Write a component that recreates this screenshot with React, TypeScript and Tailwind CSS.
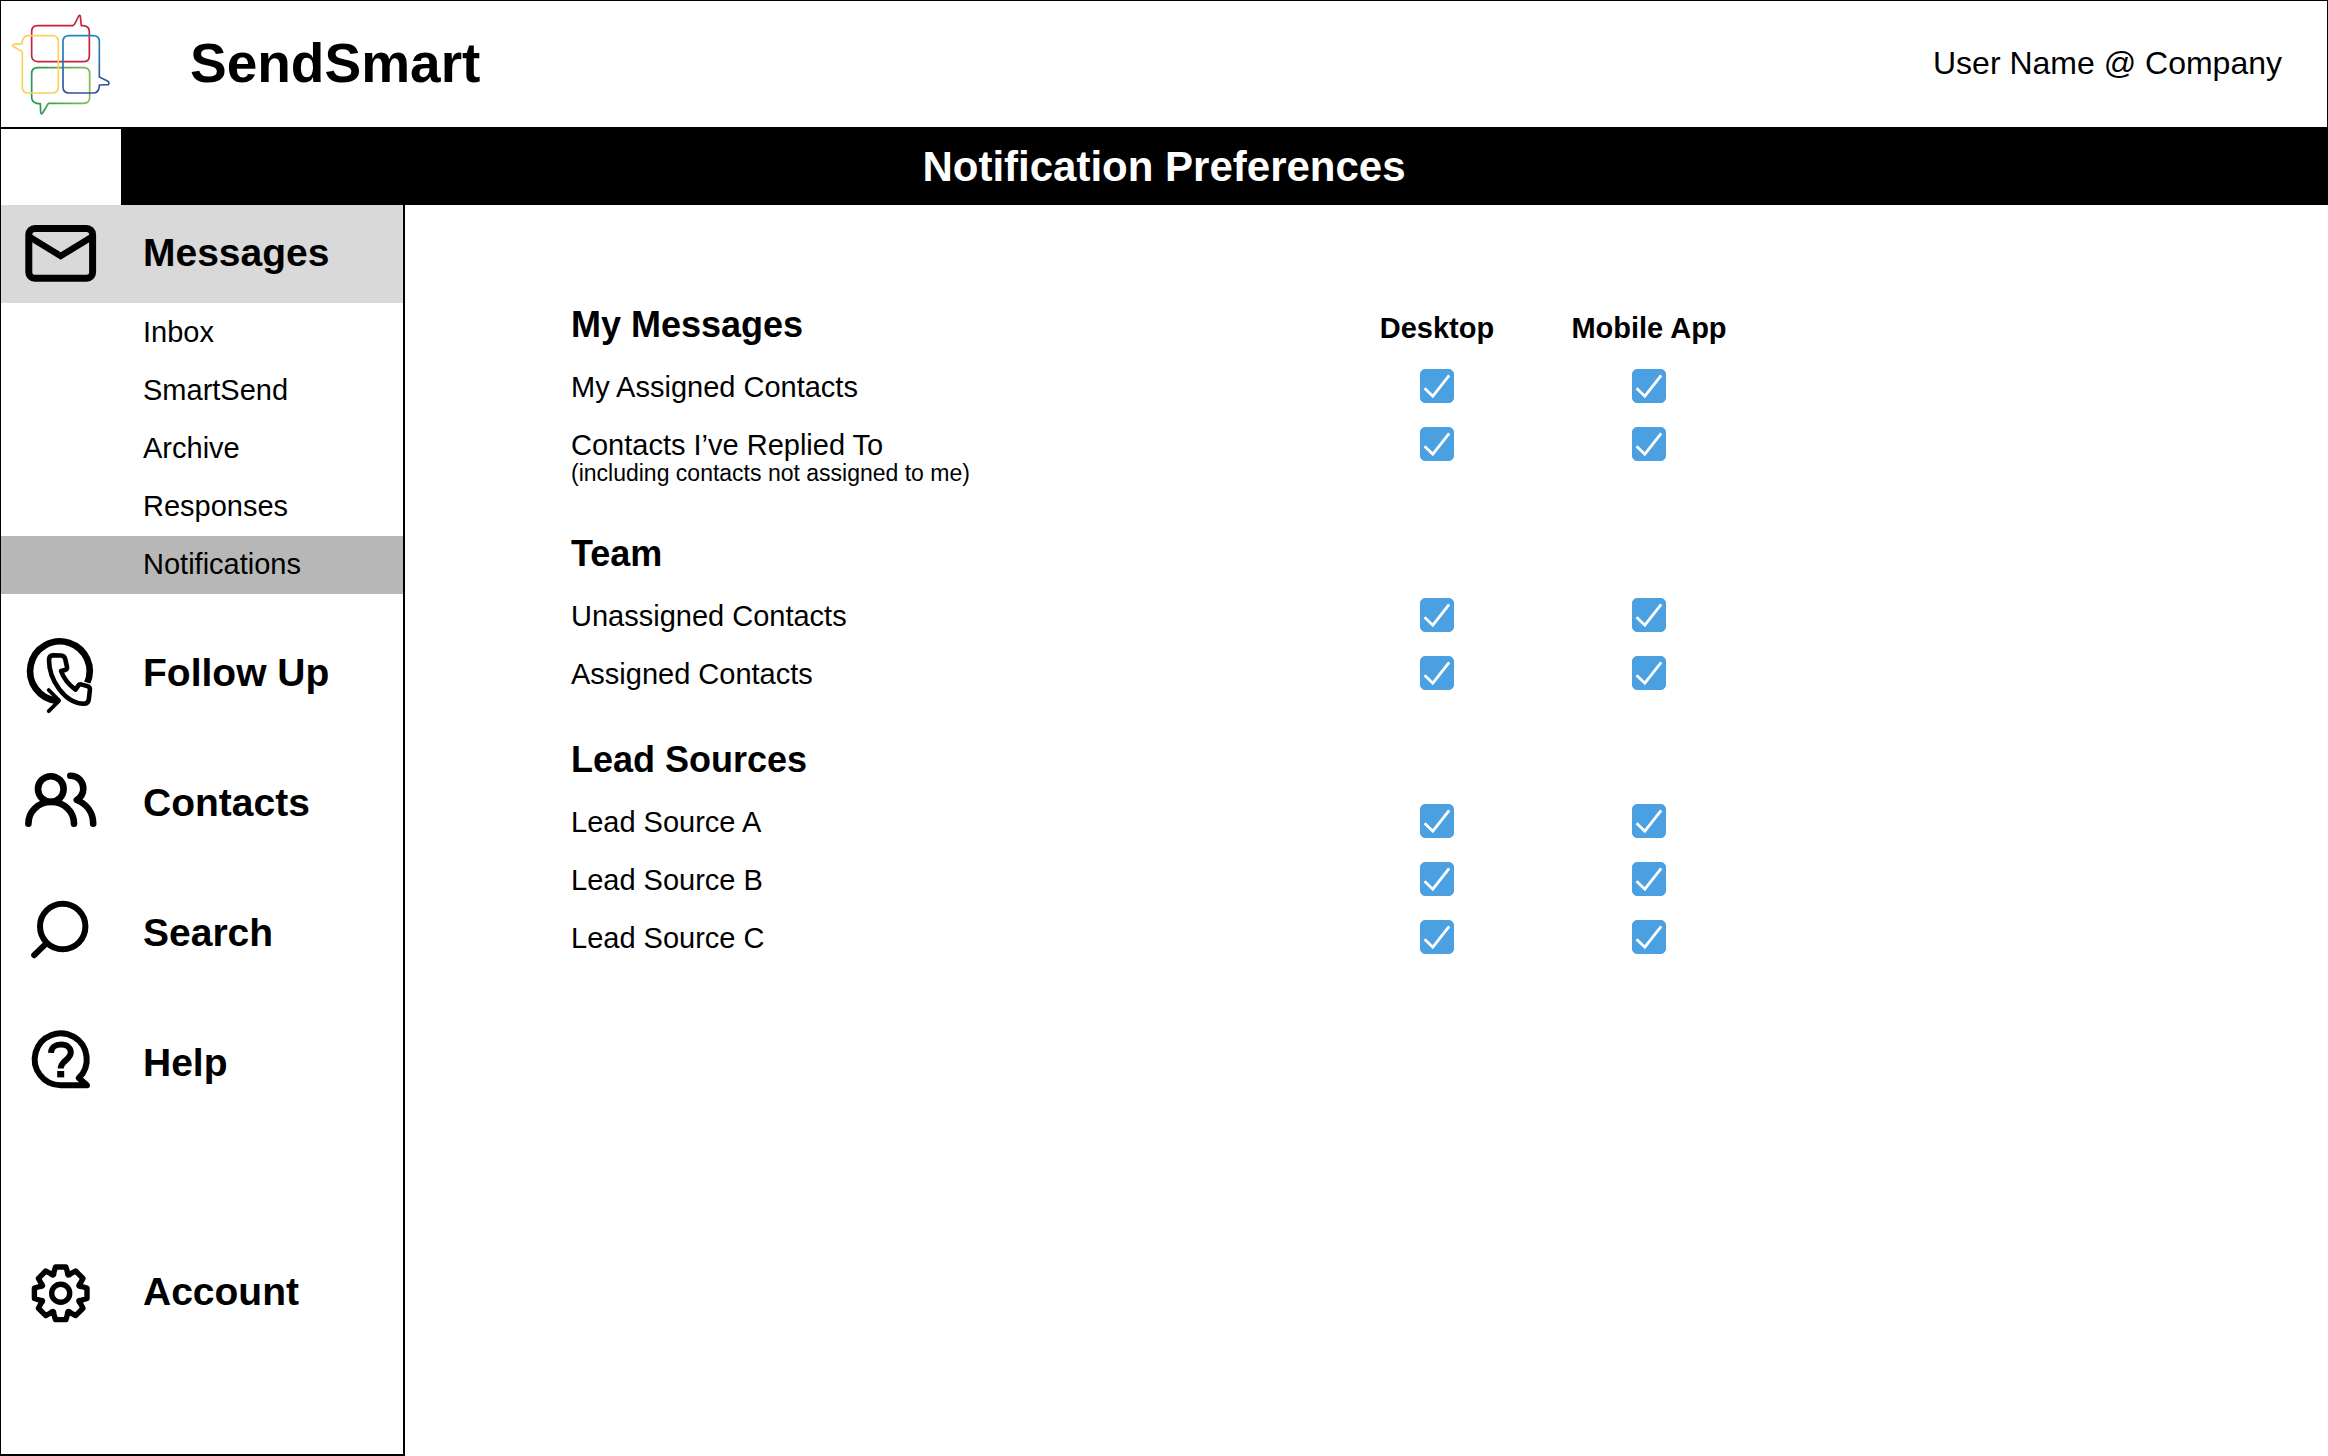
import type { ReactNode } from "react";

type Icon = () => ReactNode;

const iconProps = {
  viewBox: "0 0 80 80",
  className: "size-20",
  fill: "none",
  stroke: "currentColor",
  strokeLinecap: "round",
  strokeLinejoin: "round",
  "aria-hidden": true,
} as const;

function Logo() {
  return (
    <svg viewBox="3 3 360 378" className="h-[126px] w-[120px]" fill="none" strokeWidth="5" strokeLinejoin="round" role="img" aria-label="SendSmart logo">
      <defs>
        <linearGradient id="logo-green" gradientUnits="userSpaceOnUse" x1="95" y1="0" x2="269" y2="0">
          <stop offset="0.1" stopColor="#259a4b" />
          <stop offset="0.9" stopColor="#7cbb4c" />
        </linearGradient>
        <linearGradient id="logo-blue" gradientUnits="userSpaceOnUse" x1="0" y1="107" x2="0" y2="279">
          <stop offset="0" stopColor="#2389bd" />
          <stop offset="1" stopColor="#30509a" />
        </linearGradient>
      </defs>
      <path stroke="#c4233b" d="M113 77H218Q222 76 225 70L236 48Q240 43 241 49L244 77H250Q268 79 268 95V167Q268 185 250 185H113Q95 183 95 167V95Q95 77 113 77Z" />
      <path stroke="url(#logo-green)" d="M113 203H251Q269 203 269 221V292Q269 310 251 310H145L128 339Q123 345 122 337L121 311H113Q95 308 95 292V221Q95 203 113 203Z" />
      <path stroke="#f8d25c" d="M85 107H157Q175 107 175 125V261Q175 279 157 279H85Q67 279 67 261V155L39 139Q35 134 42 133L66 131Q67 107 85 107Z" />
      <path stroke="url(#logo-blue)" d="M207 107H280Q298 107 298 125V231L324 244Q329 249 325 254L298 255Q298 279 280 279H207Q189 279 189 261V125Q189 107 207 107Z" />
    </svg>
  );
}

const MailIcon: Icon = () => (
  <svg {...iconProps} strokeWidth="7">
    <rect x="7.8" y="14.5" width="63.8" height="49.7" rx="6" />
    <path d="M9.5 23.5 39.7 42 69.9 23.5" strokeLinejoin="miter" strokeWidth="6.4" />
  </svg>
);

const FollowUpIcon: Icon = () => (
  <svg {...iconProps}>
    <path d="M66 49.5A29.8 29.8 0 1 0 36 66.8" strokeWidth="6.6" strokeLinecap="butt" />
    <path d="M27.7 56 38.2 66.7 27.7 77.2" strokeWidth="3.8" />
    <path
      d="M28 26Q28 21.5 32 21.3L40 21.5Q43.5 21.8 44.2 25L46 33Q46.3 35.4 44 36L40 37Q44 48 54.5 55.6L57.3 51.6Q58.5 49.9 61 50.6L66.3 52.1Q69.2 53 68.9 56L67.8 65.5Q67 69.7 63 69.7C44 69.7 28 46 28 26Z"
      strokeWidth="4.6"
    />
    <path d="M61.5 47.7 70 50.2" stroke="#fff" strokeWidth="1" strokeLinecap="butt" />
  </svg>
);

const ContactsIcon: Icon = () => (
  <svg {...iconProps} strokeWidth="6.6">
    <circle cx="29.8" cy="25" r="12.8" />
    <path d="M7.4 59.8C7.4 47.5 17 38 30.2 38S53 47.5 53 59.8" />
    <path d="M49.3 11.8C57.5 11.8 62.3 18 62.3 24.8 62.3 29.5 59.5 33.6 55.8 36 65.5 40 72.2 48.5 72.2 59.8" />
  </svg>
);

const SearchIcon: Icon = () => (
  <svg {...iconProps} strokeWidth="6">
    <circle cx="41.7" cy="32.5" r="22.7" />
    <path d="M25.3 49.3 13.2 61.2" />
  </svg>
);

const HelpIcon: Icon = () => (
  <svg {...iconProps} strokeWidth="6">
    <path d="M39.7 61.3H66L57.8 54A26 26 0 1 0 39.7 61.3Z" />
    <path d="M30 28.9C30.2 23.5 34.5 20.6 40 20.6 45.8 20.6 49.8 23.8 49.8 28.6 49.8 35.8 39.7 36.6 39.7 44.6" strokeLinecap="butt" strokeWidth="6" />
    <path d="M36.2 50.2h7" strokeLinecap="butt" strokeWidth="6.4" />
  </svg>
);

function gearPath(teeth: number) {
  const cx = 39.7;
  const cy = 40.3;
  const at = (x: number, y: number, a: number) =>
    `${(cx + x * Math.cos(a) - y * Math.sin(a)).toFixed(2)} ${(cy + x * Math.sin(a) + y * Math.cos(a)).toFixed(2)}`;
  const step = (2 * Math.PI) / teeth;
  let path = `M${at(-6.8, -21, 0)}`;
  for (let i = 0; i < teeth; i++) {
    const a = i * step;
    path += `L${at(-5.2, -26.3, a)}L${at(5.2, -26.3, a)}L${at(6.8, -21, a)}Q${at(0, -17.4, a + step / 2)} ${at(-6.8, -21, a + step)}`;
  }
  return `${path}Z`;
}

const AccountIcon: Icon = () => (
  <svg {...iconProps} strokeWidth="5.4">
    <path d={gearPath(8)} />
    <circle cx="39.7" cy="40.3" r="9" />
  </svg>
);

function NavItem({ icon: Glyph, label, className = "" }: { icon: Icon; label: string; className?: string }) {
  return (
    <a href="#" className={`flex h-[98px] items-center text-[39px] leading-none font-bold ${className}`}>
      <span className="flex w-[120px] shrink-0 justify-center">
        <Glyph />
      </span>
      <span className="pb-[3px] pl-[22px]">{label}</span>
    </a>
  );
}

const messageLinks = ["Inbox", "SmartSend", "Archive", "Responses", "Notifications"];

const groups: { title: string; rows: { label: string; note?: string }[] }[] = [
  {
    title: "My Messages",
    rows: [{ label: "My Assigned Contacts" }, { label: "Contacts I’ve Replied To", note: "(including contacts not assigned to me)" }],
  },
  { title: "Team", rows: [{ label: "Unassigned Contacts" }, { label: "Assigned Contacts" }] },
  { title: "Lead Sources", rows: [{ label: "Lead Source A" }, { label: "Lead Source B" }, { label: "Lead Source C" }] },
];

const channels = ["Desktop", "Mobile App"];

function Check({ label }: { label: string }) {
  return (
    <label className="relative mx-auto block size-[34px]">
      <input
        type="checkbox"
        defaultChecked
        aria-label={label}
        className="peer block size-[34px] appearance-none rounded-[5px] border border-[#4aa0e0] checked:bg-[#4aa0e0]"
      />
      <svg viewBox="0 0 34 34" className="pointer-events-none absolute inset-0 hidden peer-checked:block" fill="none" stroke="#fff" strokeWidth="2.8" aria-hidden>
        <path d="M4.6 19.3 12.8 27.2 29.2 6.4" />
      </svg>
    </label>
  );
}

export default function App() {
  return (
    <div className="flex min-h-screen flex-col bg-white font-['Liberation_Sans',Arial,sans-serif] text-black">
      <header className="flex h-[129px] items-center border border-b-2 border-black">
        <Logo />
        <span className="pb-0.5 pl-[69px] text-[55px] leading-none font-bold">SendSmart</span>
        <span className="ml-auto pr-[45px] pb-0.5 text-[32px] leading-none">User Name @ Company</span>
      </header>

      <div className="grid h-[76px] grid-cols-[121px_1fr_121px] bg-black">
        <div className="border-l border-black bg-white" />
        <h1 className="self-center text-center text-[42px] leading-none font-bold text-white">Notification Preferences</h1>
      </div>

      <div className="flex flex-1">
        <nav className="w-[405px] shrink-0 border-r-2 border-b-2 border-l border-black">
          <NavItem icon={MailIcon} label="Messages" className="bg-[#d9d9d9]" />
          <ul className="grid h-[291px] grid-rows-5 text-[29px] leading-none">
            {messageLinks.map((link) => (
              <li key={link}>
                <a
                  href="#"
                  className={`flex h-full items-center pl-[142px] ${link === "Notifications" ? "bg-[#b7b7b7]" : ""}`}
                >
                  {link}
                </a>
              </li>
            ))}
          </ul>
          <div className="mt-[31px] flex flex-col gap-8">
            <NavItem icon={FollowUpIcon} label="Follow Up" />
            <NavItem icon={ContactsIcon} label="Contacts" />
            <NavItem icon={SearchIcon} label="Search" />
            <NavItem icon={HelpIcon} label="Help" />
          </div>
          <NavItem icon={AccountIcon} label="Account" className="mt-[131px]" />
        </nav>

        <main className="flex-1 pt-[87px] pl-[166px]">
          <table className="w-full max-w-[1184px] table-fixed text-[29px] leading-[34px]">
            <colgroup>
              <col />
              <col className="w-[212px]" />
              <col className="w-[212px]" />
            </colgroup>
            {groups.map((group, index) => (
              <tbody key={group.title}>
                <tr className={index === 0 ? "h-[66px]" : "h-[90px]"}>
                  <th scope="rowgroup" className={`text-left text-[36px] font-bold ${index === 0 ? "" : "pt-6"}`}>
                    {group.title}
                  </th>
                  {channels.map((channel) =>
                    index === 0 ? (
                      <th key={channel} scope="col" className="pt-1.5 font-bold">
                        {channel}
                      </th>
                    ) : (
                      <td key={channel} />
                    ),
                  )}
                </tr>
                {group.rows.map((row) => (
                  <tr key={row.label} className="align-top">
                    <th scope="row" className="py-3 text-left font-normal">
                      {row.label}
                      {row.note && <span className="block text-[23px] leading-[23px]">{row.note}</span>}
                    </th>
                    {channels.map((channel) => (
                      <td key={channel} className="py-[11px]">
                        <Check label={`${row.label}, ${channel}`} />
                      </td>
                    ))}
                  </tr>
                ))}
              </tbody>
            ))}
          </table>
        </main>
      </div>
    </div>
  );
}
